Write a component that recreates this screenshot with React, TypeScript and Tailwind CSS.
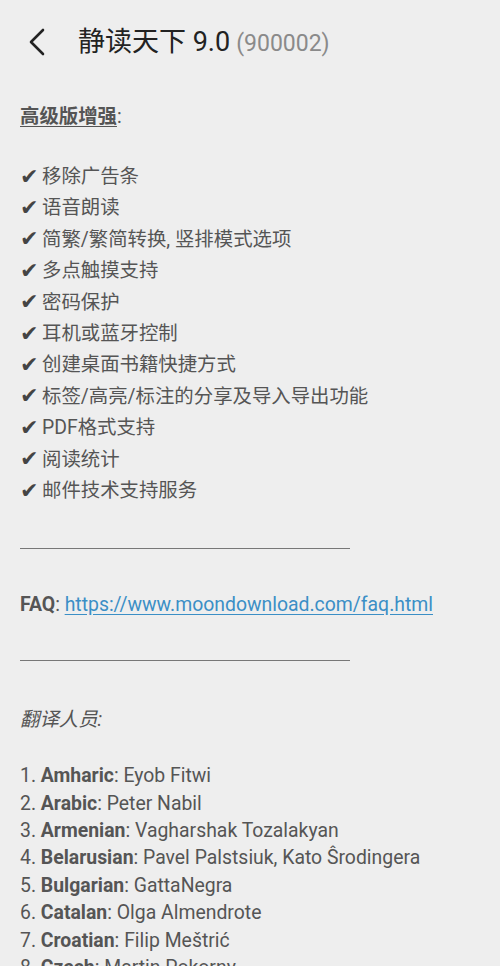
const features = [
  "移除广告条",
  "语音朗读",
  "简繁/繁简转换, 竖排模式选项",
  "多点触摸支持",
  "密码保护",
  "耳机或蓝牙控制",
  "创建桌面书籍快捷方式",
  "标签/高亮/标注的分享及导入导出功能",
  "PDF格式支持",
  "阅读统计",
  "邮件技术支持服务",
];

const translators: [string, string][] = [
  ["Amharic", "Eyob Fitwi"],
  ["Arabic", "Peter Nabil"],
  ["Armenian", "Vagharshak Tozalakyan"],
  ["Belarusian", "Pavel Palstsiuk, Kato Ŝrodingera"],
  ["Bulgarian", "GattaNegra"],
  ["Catalan", "Olga Almendrote"],
  ["Croatian", "Filip Meštrić"],
  ["Czech", "Martin Pokorny"],
];

export default function App() {
  return (
    <div
      className="h-[966px] overflow-hidden bg-[#eeeeee] text-[#555555]"
      style={{ fontFamily: 'Roboto, "Noto Sans CJK SC", sans-serif' }}
    >
      {/* toolbar */}
      <div className="flex h-[84px] items-center">
        <svg className="ml-[28px] h-[28px] w-[20px]" viewBox="0 0 20 28" fill="none">
          <path d="M15 2 3 14l12 12" stroke="#222222" strokeWidth="2.6" strokeLinecap="round" strokeLinejoin="round" />
        </svg>
        <div className="ml-[30px] flex items-baseline">
          <span className="text-[27px] text-[#222222]">静读天下 9.0</span>
          <span className="ml-[6px] text-[23px] text-[#8a8a8a]">(900002)</span>
        </div>
      </div>

      <div className="px-5 text-[19.4px]">
        <div className="mt-[17px] h-[32px] leading-[32px]">
          <span className="font-bold underline underline-offset-[3px]">高级版增强</span>
          <span>:</span>
        </div>

        <ul className="mt-[28px] leading-[31.4px]">
          {features.map((f) => (
            <li key={f} className="flex h-[31.4px] items-center whitespace-nowrap">
              <span
                className="inline-block w-[18px] text-[22px] leading-none text-[#444444]"
                style={{ fontFamily: '"DejaVu Sans", sans-serif' }}
              >
                ✔
              </span>
              <span className="ml-[4px]">{f}</span>
            </li>
          ))}
        </ul>

        <div className="mt-[42px] h-px w-[330px] bg-[#777777]" />

        <div className="mt-[40px] h-[31px] leading-[31px]">
          <span className="font-bold">FAQ</span>:{" "}
          <span className="text-[#3b8fc6] underline underline-offset-[3px]">
            https://www.moondownload.com/faq.html
          </span>
        </div>

        <div className="mt-[40px] h-px w-[330px] bg-[#777777]" />

        <div className="mt-[43px] h-[31px] italic leading-[31px]">翻译人员:</div>

        <ol className="mt-[27px] leading-[27.4px]">
          {translators.map(([lang, name], i) => (
            <li key={lang} className="h-[27.4px] whitespace-nowrap">
              {i + 1}. <span className="font-bold">{lang}</span>: {name}
            </li>
          ))}
        </ol>
      </div>
    </div>
  );
}
